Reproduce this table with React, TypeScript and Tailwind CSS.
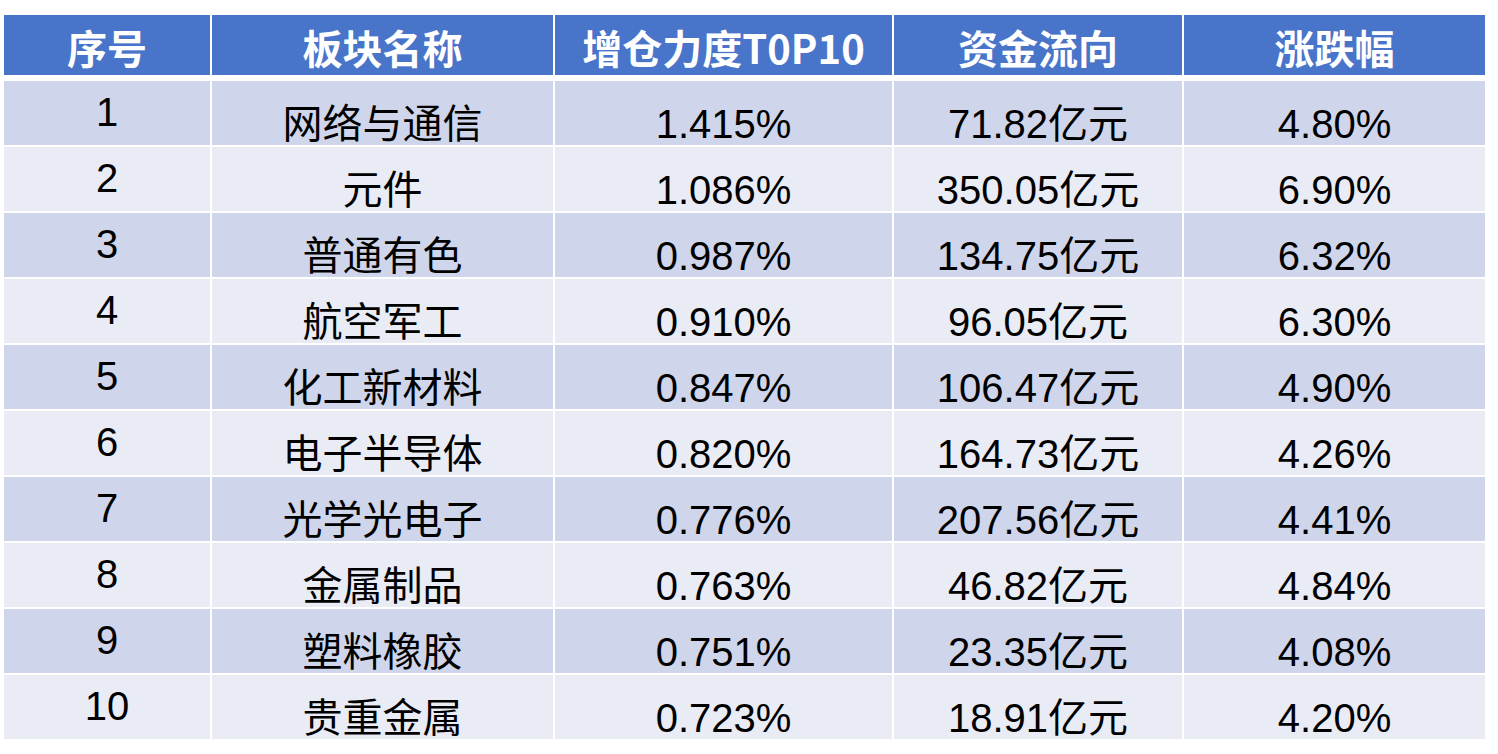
import React from 'react';

// 板块增仓力度 TOP10 表格
const HEADERS = ['序号', '板块名称', '增仓力度T0P10', '资金流向', '涨跌幅'];

const ROWS = [
  { no: '1', name: '网络与通信', weight: '1.415%', flow: '71.82亿元', change: '4.80%' },
  { no: '2', name: '元件', weight: '1.086%', flow: '350.05亿元', change: '6.90%' },
  { no: '3', name: '普通有色', weight: '0.987%', flow: '134.75亿元', change: '6.32%' },
  { no: '4', name: '航空军工', weight: '0.910%', flow: '96.05亿元', change: '6.30%' },
  { no: '5', name: '化工新材料', weight: '0.847%', flow: '106.47亿元', change: '4.90%' },
  { no: '6', name: '电子半导体', weight: '0.820%', flow: '164.73亿元', change: '4.26%' },
  { no: '7', name: '光学光电子', weight: '0.776%', flow: '207.56亿元', change: '4.41%' },
  { no: '8', name: '金属制品', weight: '0.763%', flow: '46.82亿元', change: '4.84%' },
  { no: '9', name: '塑料橡胶', weight: '0.751%', flow: '23.35亿元', change: '4.08%' },
  { no: '10', name: '贵重金属', weight: '0.723%', flow: '18.91亿元', change: '4.20%' },
];

const GRID = 'grid grid-cols-[206px_341px_337px_288px_301px] gap-x-[2px]';

export default function App() {
  return (
    <div className="w-[1498px] h-[754px] bg-white pt-[15px] pl-[4px] font-['Liberation_Sans','Noto_Sans_CJK_SC',sans-serif] text-black">
      {/* Header */}
      <div className={`${GRID} h-[60px] mb-[6px]`}>
        {HEADERS.map(h => (
          <div
            key={h}
            className="bg-[#4874c9] text-white text-center text-[40px] leading-[40px] pt-[12px] font-bold font-['Noto_Sans_CJK_SC',sans-serif]"
          >
            {h}
          </div>
        ))}
      </div>

      {/* Body */}
      <div className="flex flex-col gap-y-[2px]">
        {ROWS.map((r, i) => {
          const bg = i % 2 === 0 ? 'bg-[#cfd5ea]' : 'bg-[#e9ebf5]';
          return (
            <div key={r.no} className={`${GRID} h-[64px]`}>
              <div className={`${bg} text-center text-[40px] leading-[40px] pt-[11px]`}>{r.no}</div>
              <div className={`${bg} text-center text-[40px] leading-[40px] pt-[23px]`}>{r.name}</div>
              <div className={`${bg} text-center text-[40px] leading-[40px] pt-[23px]`}>{r.weight}</div>
              <div className={`${bg} text-center text-[40px] leading-[40px] pt-[23px]`}>{r.flow}</div>
              <div className={`${bg} text-center text-[40px] leading-[40px] pt-[23px]`}>{r.change}</div>
            </div>
          );
        })}
      </div>
    </div>
  );
}
